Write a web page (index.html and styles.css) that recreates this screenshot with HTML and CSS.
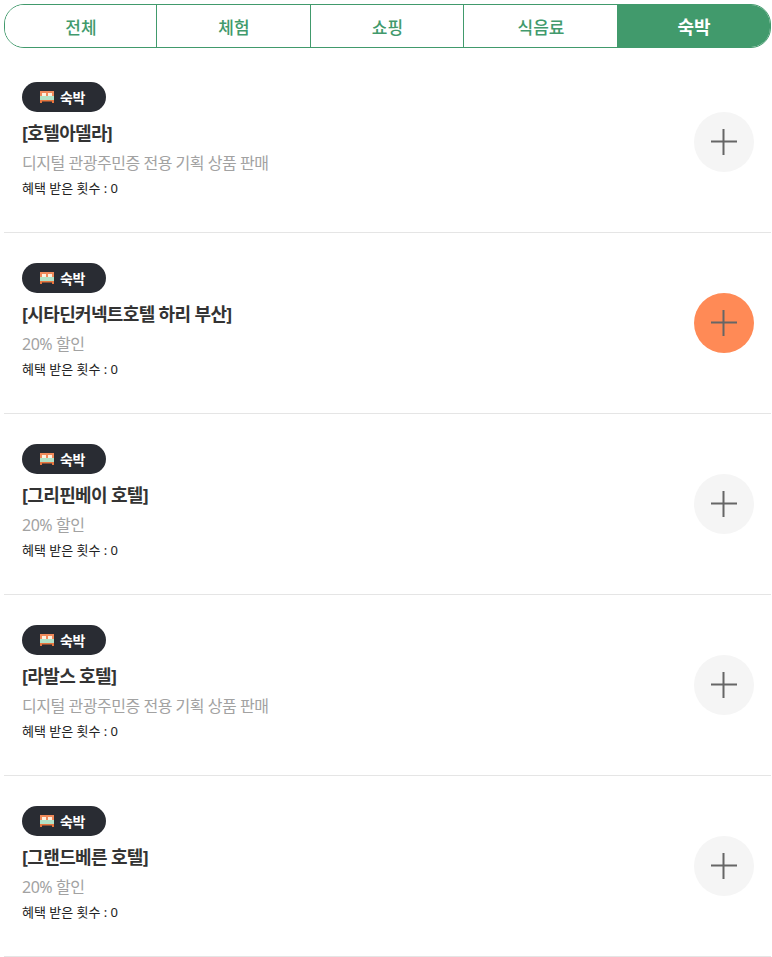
FILE: index.html
```html
<!DOCTYPE html>
<html lang="ko">
<head>
<meta charset="UTF-8" />
<meta name="viewport" content="width=device-width, initial-scale=1" />
<title>숙박 혜택</title>
<link rel="stylesheet" href="styles.css">
</head>
<body>

<div class="tab-bar">
  <button class="tab-btn">전체</button>
  <button class="tab-btn">체험</button>
  <button class="tab-btn">쇼핑</button>
  <button class="tab-btn">식음료</button>
  <button class="tab-btn active">숙박</button>
</div>

<svg class="icon-defs" width="0" height="0" aria-hidden="true">
  <symbol id="bed" viewBox="0 0 14 12">
    <rect x="0" y="0" width="14" height="5" fill="#f08a5a"/>
    <rect x="2" y="2" width="4" height="3" fill="#fdf0e0"/>
    <rect x="8" y="2" width="4" height="3" fill="#fdf0e0"/>
    <rect x="0" y="5" width="14" height="4" fill="#b2e2c6"/>
    <rect x="0" y="9" width="14" height="1.5" fill="#e8763f"/>
    <rect x="0" y="10" width="2" height="2" fill="#e8763f"/>
    <rect x="12" y="10" width="2" height="2" fill="#e8763f"/>
  </symbol>
  <symbol id="plus" viewBox="0 0 60 60">
    <path d="M17 29.5H43M29.5 17V43" fill="none" stroke="#666" stroke-width="2"/>
  </symbol>
</svg>

<ul class="list">
  <li class="list-item">
    <div class="info">
      <span class="badge"><svg class="bed"><use href="#bed"/></svg>숙박</span>
      <h3 class="name">[호텔아델라]</h3>
      <p class="desc">디지털 관광주민증 전용 기획 상품 판매</p>
      <p class="count">혜택 받은 횟수 : 0</p>
    </div>
    <button class="add-btn" aria-label="추가"><svg class="plus"><use href="#plus"/></svg></button>
  </li>
  <li class="list-item">
    <div class="info">
      <span class="badge"><svg class="bed"><use href="#bed"/></svg>숙박</span>
      <h3 class="name">[시타딘커넥트호텔 하리 부산]</h3>
      <p class="desc">20% 할인</p>
      <p class="count">혜택 받은 횟수 : 0</p>
    </div>
    <button class="add-btn on" aria-label="추가"><svg class="plus"><use href="#plus"/></svg></button>
  </li>
  <li class="list-item">
    <div class="info">
      <span class="badge"><svg class="bed"><use href="#bed"/></svg>숙박</span>
      <h3 class="name">[그리핀베이 호텔]</h3>
      <p class="desc">20% 할인</p>
      <p class="count">혜택 받은 횟수 : 0</p>
    </div>
    <button class="add-btn" aria-label="추가"><svg class="plus"><use href="#plus"/></svg></button>
  </li>
  <li class="list-item">
    <div class="info">
      <span class="badge"><svg class="bed"><use href="#bed"/></svg>숙박</span>
      <h3 class="name">[라발스 호텔]</h3>
      <p class="desc">디지털 관광주민증 전용 기획 상품 판매</p>
      <p class="count">혜택 받은 횟수 : 0</p>
    </div>
    <button class="add-btn" aria-label="추가"><svg class="plus"><use href="#plus"/></svg></button>
  </li>
  <li class="list-item">
    <div class="info">
      <span class="badge"><svg class="bed"><use href="#bed"/></svg>숙박</span>
      <h3 class="name">[그랜드베른 호텔]</h3>
      <p class="desc">20% 할인</p>
      <p class="count">혜택 받은 횟수 : 0</p>
    </div>
    <button class="add-btn" aria-label="추가"><svg class="plus"><use href="#plus"/></svg></button>
  </li>
</ul>

</body>
</html>
```
FILE: styles.css
```css
* {
  box-sizing: border-box;
}
body {
  font-family: "Noto Sans", "Noto Sans CJK KR", sans-serif;
  margin: 0;
  padding: 4px 1px 0 4px;
  background: #fff;
  color: #333;
}

/* Category tabs */
.tab-bar {
  display: grid;
  grid-template-columns: 152px 154px 153px 153px 1fr;
  height: 44px;
  border: 1px solid #419a6c;
  border-radius: 20px;
  overflow: hidden;
}
.tab-btn {
  background: #fff;
  border: none;
  border-right: 1px solid #419a6c;
  font-family: inherit;
  font-size: 17px;
  font-weight: 500;
  color: #419a6c;
  padding: 0 0 0 1px;
}
.tab-btn:nth-child(4),
.tab-btn:last-child {
  border-right: none;
}
.tab-btn.active {
  background: #419a6c;
  color: #fff;
  font-size: 18px;
  font-weight: 700;
}

/* Hotel list */
.list {
  list-style: none;
  margin: 4px 0 0;
  padding: 0;
}
.list-item {
  display: flex;
  justify-content: space-between;
  align-items: center;
  height: 181px;
  padding: 0 17px 0 18px;
  border-bottom: 1px solid #e5e5e5;
}
.info {
  display: flex;
  flex-direction: column;
  align-items: flex-start;
  margin-top: -4px;
}
.badge {
  display: flex;
  align-items: center;
  gap: 6px;
  width: 84px;
  height: 30px;
  padding-left: 18px;
  border-radius: 15px;
  background: #292c33;
  color: #fff;
  font-size: 14px;
  font-weight: 700;
  letter-spacing: -0.3px;
}
.bed {
  width: 14px;
  height: 12px;
}
.icon-defs {
  position: absolute;
}
.name {
  margin: 8px 0 0;
  font-size: 18px;
  line-height: 26px;
  font-weight: 700;
  letter-spacing: -0.65px;
  color: #333;
}
.desc {
  margin: 6px 0 0;
  font-size: 16px;
  line-height: 22px;
  letter-spacing: -0.47px;
  color: #a2a2a2;
}
.count {
  margin: 5px 0 0;
  font-size: 13px;
  line-height: 19px;
  letter-spacing: -0.02px;
  color: #222;
}

/* Plus button */
.add-btn {
  width: 60px;
  height: 60px;
  border: none;
  border-radius: 50%;
  background: #f5f5f5;
  padding: 0;
}
.add-btn.on {
  background: #ff8a56;
}
.plus {
  display: block;
  width: 60px;
  height: 60px;
}
```
